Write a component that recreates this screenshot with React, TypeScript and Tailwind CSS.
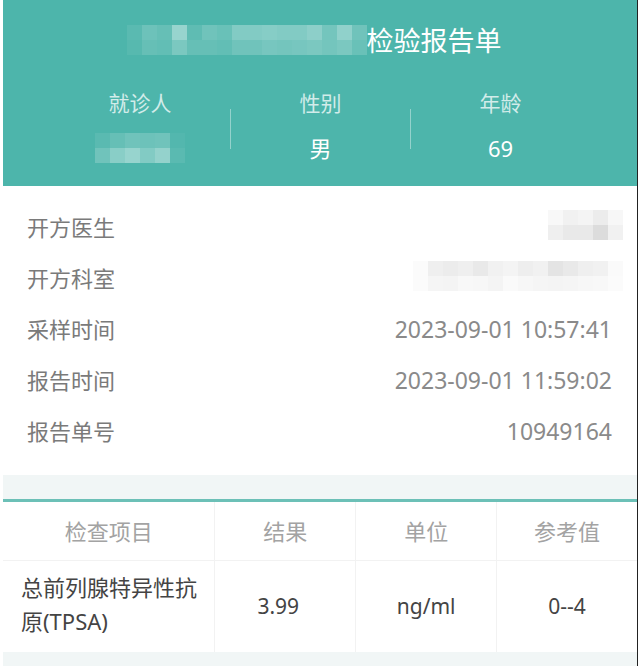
import React from 'react';

const FONT = '"Noto Sans", "Noto Sans CJK SC", sans-serif';

// pixelated blocks standing in for the blurred-out text
const titleBlur = [
  [0.08, 0.18, 0.14, 0.42, 0.1, 0.2, 0.16, 0.3, 0.3, 0.32, 0.3, 0.3, 0.36, 0.22, 0.38, 0.2],
  [0.06, 0.14, 0.12, 0.26, 0.14, 0.14, 0.12, 0.2, 0.2, 0.24, 0.22, 0.24, 0.26, 0.22, 0.26, 0.16],
];
const nameBlur = [
  [0.08, 0.14, 0.2, 0.18, 0.2, 0.04],
  [0.2, 0.34, 0.42, 0.3, 0.4, 0.08],
];
const doctorBlur = [
  [0.05, 0.1, 0.08, 0.14, 0.06],
  [0.12, 0.16, 0.16, 0.26, 0.1],
];
const deptBlur = [
  [0.03, 0.12, 0.14, 0.12, 0.16, 0.1, 0.08, 0.13, 0.1, 0.2, 0.16, 0.12, 0.1, 0.04],
  [0.03, 0.07, 0.08, 0.05, 0.06, 0.08, 0.04, 0.06, 0.07, 0.08, 0.07, 0.06, 0.05, 0.03],
];

const Pixelated = ({ rows, rgb, cell = 15 }: { rows: number[][]; rgb: string; cell?: number }) => (
  <div className="flex flex-col">
    {rows.map((row, r) => (
      <div key={r} className="flex">
        {row.map((a, c) => (
          <div key={c} style={{ width: cell, height: cell, backgroundColor: `rgba(${rgb},${a})` }} />
        ))}
      </div>
    ))}
  </div>
);

const infoRows: { label: string; value: React.ReactNode; blur?: boolean }[] = [
  { label: '开方医生', value: <Pixelated rows={doctorBlur} rgb="120,120,120" />, blur: true },
  { label: '开方科室', value: <Pixelated rows={deptBlur} rgb="120,120,120" />, blur: true },
  { label: '采样时间', value: '2023-09-01 10:57:41' },
  { label: '报告时间', value: '2023-09-01 11:59:02' },
  { label: '报告单号', value: '10949164' },
];

export default function App() {
  return (
    <div className="w-[640px] h-[666px] bg-white overflow-hidden flex" style={{ fontFamily: FONT }}>
      <div className="w-[3px] shrink-0" />
      <div className="w-[634px] shrink-0 flex flex-col">
        {/* Header */}
        <div className="h-[186px] bg-[#4db5ab] flex flex-col items-center">
          <div className="mt-[22px] mr-[12px] h-[36px] flex items-center">
            <Pixelated rows={titleBlur} rgb="255,255,255" cell={15} />
            <span className="text-[27px] leading-none text-white">检验报告单</span>
          </div>
          <div className="mt-[33px] flex">
            {[
              { label: '就诊人', value: <Pixelated rows={nameBlur} rgb="255,255,255" cell={15} /> },
              { label: '性别', value: '男' },
              { label: '年龄', value: '69' },
            ].map((item, i) => (
              <div key={item.label} className="flex items-center">
                {i > 0 && <div className="w-px h-[40px] mt-[5px] bg-white/40" />}
                <div className={`${i === 0 ? 'w-[180px]' : 'w-[179px]'} flex flex-col items-center`}>
                  <div className="h-[26px] flex items-center text-[21px] text-white/75">{item.label}</div>
                  <div className="mt-[17px] h-[28px] flex items-center text-[22px] text-white">{item.value}</div>
                </div>
              </div>
            ))}
          </div>
        </div>

        {/* Report info */}
        <div className="pt-[16px] pb-[18px] pl-[24px] pr-[25px]">
          {infoRows.map((row) => (
            <div key={row.label} className="h-[51px] flex items-center justify-between">
              <span className="text-[22px] text-[#7a7a7a]">{row.label}</span>
              <span className={`text-[23px] text-[#8a8a8a] ${row.blur ? 'mr-[-11px] mt-[-6px]' : ''}`}>{row.value}</span>
            </div>
          ))}
        </div>

        <div className="h-[24px] bg-[#f1f6f6]" />
        <div className="h-[3px] bg-[#6cc0b7]" />

        {/* Result table */}
        <div className="grid grid-cols-[3fr_2fr_2fr_2fr]">
          {['检查项目', '结果', '单位', '参考值'].map((h, i) => (
            <div
              key={h}
              className={`h-[59px] flex items-center justify-center text-[22px] text-[#a3a3a3] border-b border-[#f2f2f2] ${i > 0 ? 'border-l' : ''}`}
            >
              {h}
            </div>
          ))}
          <div className="h-[91px] flex items-center pl-[18px] pb-[6px] text-[22px] leading-[34px] text-[#444]">
            总前列腺特异性抗原(TPSA)
          </div>
          <div className="h-[91px] flex items-center justify-center pr-[14px] text-[21px] text-[#444] border-l border-[#f2f2f2]">
            3.99
          </div>
          {['ng/ml', '0--4'].map((v) => (
            <div key={v} className="h-[91px] flex items-center justify-center text-[21px] text-[#444] border-l border-[#f2f2f2]">
              {v}
            </div>
          ))}
        </div>
        <div className="flex-1 bg-[#f1f6f6]" />
      </div>
      <div className="w-[3px] shrink-0 border-l border-[#222]" />
    </div>
  );
}
